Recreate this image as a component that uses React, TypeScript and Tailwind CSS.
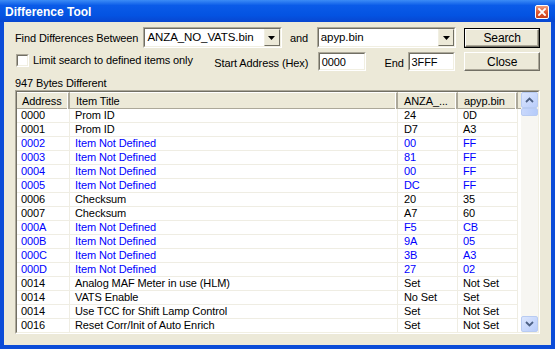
import React from "react";

type Row = { a: string; t: string; v1: string; v2: string; blue?: boolean };

const rows: Row[] = [
  { a: "0000", t: "Prom ID", v1: "24", v2: "0D" },
  { a: "0001", t: "Prom ID", v1: "D7", v2: "A3" },
  { a: "0002", t: "Item Not Defined", v1: "00", v2: "FF", blue: true },
  { a: "0003", t: "Item Not Defined", v1: "81", v2: "FF", blue: true },
  { a: "0004", t: "Item Not Defined", v1: "00", v2: "FF", blue: true },
  { a: "0005", t: "Item Not Defined", v1: "DC", v2: "FF", blue: true },
  { a: "0006", t: "Checksum", v1: "20", v2: "35" },
  { a: "0007", t: "Checksum", v1: "A7", v2: "60" },
  { a: "000A", t: "Item Not Defined", v1: "F5", v2: "CB", blue: true },
  { a: "000B", t: "Item Not Defined", v1: "9A", v2: "05", blue: true },
  { a: "000C", t: "Item Not Defined", v1: "3B", v2: "A3", blue: true },
  { a: "000D", t: "Item Not Defined", v1: "27", v2: "02", blue: true },
  { a: "0014", t: "Analog MAF Meter in use (HLM)", v1: "Set", v2: "Not Set" },
  { a: "0014", t: "VATS Enable", v1: "No Set", v2: "Set" },
  { a: "0014", t: "Use TCC for Shift Lamp Control", v1: "Set", v2: "Not Set" },
  { a: "0016", t: "Reset Corr/Init of Auto Enrich", v1: "Set", v2: "Not Set" },
];

function Sunken({ className, children }: { className?: string; children?: React.ReactNode }) {
  return (
    <div
      className={
        "border border-t-[#ACA899] border-l-[#ACA899] border-r-white border-b-white " + (className ?? "")
      }
    >
      <div className="h-full w-full border border-t-[#716F64] border-l-[#716F64] border-r-[#F1EFE2] border-b-[#F1EFE2] bg-white">
        {children}
      </div>
    </div>
  );
}

function Combo({ value, className }: { value: string; className?: string }) {
  return (
    <Sunken className={className}>
      <div className="flex h-full items-center">
        <span className="flex-1 whitespace-nowrap pl-[2px] pt-[1px] text-[11.5px] text-black">{value}</span>
        <div className="flex h-full w-[16px] items-center justify-center border border-t-[#F1EFE2] border-l-[#F1EFE2] border-r-[#716F64] border-b-[#716F64] bg-[#ECE9D8]">
          <svg width="7" height="4" viewBox="0 0 7 4">
            <path d="M0 0h7L3.5 4z" fill="#000" />
          </svg>
        </div>
      </div>
    </Sunken>
  );
}

function Btn({ label, def }: { label: string; def?: boolean }) {
  return (
    <div className={"h-full w-full " + (def ? "border border-black" : "")}>
      <div className="flex h-full w-full items-center justify-center border border-t-white border-l-white border-r-[#716F64] border-b-[#716F64] bg-[#ECE9D8] pt-[1px] shadow-[inset_-1px_-1px_0_#ACA899] text-[12px] text-black">
        {label}
      </div>
    </div>
  );
}

export default function App() {
  return (
    <div
      className="relative flex h-[349px] w-[555px] flex-col overflow-hidden whitespace-nowrap bg-[#0B4CD8] text-[11px] leading-none"
      style={{ fontFamily: '"Liberation Sans", Arial, sans-serif' }}
    >
      {/* Title bar */}
      <div className="relative flex h-[22px] shrink-0 items-center bg-[linear-gradient(to_bottom,#3C8CF6,#0A5BE8_25%,#0453E2_70%,#0846D0)] pl-[5px]">
        <span className="pt-[1px] text-[12px] font-bold text-white">Difference Tool</span>
        <div className="absolute left-[535px] top-[5px] flex h-[14px] w-[14px] items-center justify-center rounded-[2px] border border-white bg-[linear-gradient(to_bottom,#F09F80,#E15A32_50%,#C8401C)]">
          <svg width="8" height="8" viewBox="0 0 8 8">
            <path d="M1 1L7 7M7 1L1 7" stroke="#fff" strokeWidth="1.8" strokeLinecap="square" />
          </svg>
        </div>
      </div>

      {/* Body */}
      <div className="mx-[4px] mb-[4px] flex flex-1 flex-col bg-[#ECE9D8] pl-[11px] pr-[11px] text-[11px] tracking-[-0.1px] text-black">
        {/* Row 1 */}
        <div className="mt-[5px] flex h-[21px] items-center">
          <span className="w-[129px] pt-[1px]">Find Differences Between</span>
          <Combo value="ANZA_NO_VATS.bin" className="h-[21px] w-[139px]" />
          <span className="ml-[8px] w-[27px] pt-[2px]">and</span>
          <Combo value="apyp.bin" className="h-[21px] w-[140px]" />
          <div className="ml-[8px] h-[20px] w-[76px]">
            <Btn label="Search" def />
          </div>
        </div>
        {/* Row 2 */}
        <div className="mt-[4px] flex h-[19px] items-center">
          <div className="ml-[1px] mt-[-3px] h-[13px] w-[13px]">
            <Sunken className="h-[13px] w-[13px]" />
          </div>
          <span className="ml-[4px] mt-[-3px] w-[182px]">Limit search to defined items only</span>
          <span className="w-[104px] pt-[4px]">Start Address (Hex)</span>
          <Sunken className="h-[19px] w-[48px]">
            <div className="pl-[2px] pt-[3px]">0000</div>
          </Sunken>
          <span className="ml-[19px] w-[23px] pt-[4px]">End</span>
          <Sunken className="h-[19px] w-[48px]">
            <div className="pl-[2px] pt-[3px]">3FFF</div>
          </Sunken>
          <div className="ml-[9px] h-[19px] w-[76px]">
            <Btn label="Close" />
          </div>
        </div>
        {/* Row 3 */}
        <div className="mt-[7px] h-[12px]">947 Bytes Different</div>

        {/* List */}
        <div className="h-[244px] w-[525px] border border-t-[#ACA899] border-l-[#ACA899] border-r-white border-b-white">
          <div className="flex h-full w-full border border-t-[#716F64] border-l-[#716F64] border-r-[#F1EFE2] border-b-[#F1EFE2] bg-white">
            <div className="flex flex-1 flex-col overflow-hidden">
              {/* Header */}
              <div className="flex h-[17px] shrink-0 bg-[#ECE9D8]">
                {[
                  ["Address", "w-[53px] pl-[5px]"],
                  ["Item Title", "w-[328px] pl-[6px]"],
                  ["ANZA_...", "w-[60px] pl-[6px]"],
                  ["apyp.bin", "w-[60px] pl-[6px]"],
                ].map(([l, c]) => (
                  <div
                    key={l}
                    className={
                      "flex items-center border-t border-t-white border-r-2 border-r-[#ACA899] pt-[1px] shadow-[inset_-1px_0_0_#fff,inset_0_-1px_0_#ACA899] " +
                      c
                    }
                  >
                    {l}
                  </div>
                ))}
                <div className="flex-1 border-b border-b-[#ACA899]" />
              </div>
              {/* Rows */}
              {rows.map((r, i) => (
                <div
                  key={i}
                  className={"flex h-[14px] shrink-0 " + (r.blue ? "text-[#0000FF]" : "text-black")}
                >
                  <div className="flex w-[53px] items-center border-b border-r border-[#EFEDE3] pl-[4px]">{r.a}</div>
                  <div className="flex w-[328px] items-center border-b border-r border-[#EFEDE3] pl-[5px]">{r.t}</div>
                  <div className="flex w-[60px] items-center border-b border-r border-[#EFEDE3] pl-[6px]">{r.v1}</div>
                  <div className="flex w-[60px] items-center border-b border-r border-[#EFEDE3] pl-[5px]">{r.v2}</div>
                </div>
              ))}
            </div>
            {/* Scrollbar */}
            <div className="flex w-[17px] flex-col bg-[#F7F6F2]">
              <div className="flex h-[16px] w-[17px] items-center justify-center rounded-[2px] border border-[#B8CBF2] bg-[linear-gradient(to_bottom_right,#DCE6FD,#B9CDFB)]">
                <svg width="9" height="6" viewBox="0 0 9 6">
                  <path d="M1 5L4.5 1.5L8 5" stroke="#4D6185" strokeWidth="1.8" fill="none" />
                </svg>
              </div>
              <div className="h-[8px] w-[17px] rounded-[2px] border border-[#B8CBF2] bg-[linear-gradient(to_right,#C9D8FC,#B5CBFA)]" />
              <div className="flex-1" />
              <div className="flex h-[16px] w-[17px] items-center justify-center rounded-[2px] border border-[#B8CBF2] bg-[linear-gradient(to_bottom_right,#DCE6FD,#B9CDFB)]">
                <svg width="9" height="6" viewBox="0 0 9 6">
                  <path d="M1 1L4.5 4.5L8 1" stroke="#4D6185" strokeWidth="1.8" fill="none" />
                </svg>
              </div>
            </div>
          </div>
        </div>
      </div>
    </div>
  );
}
